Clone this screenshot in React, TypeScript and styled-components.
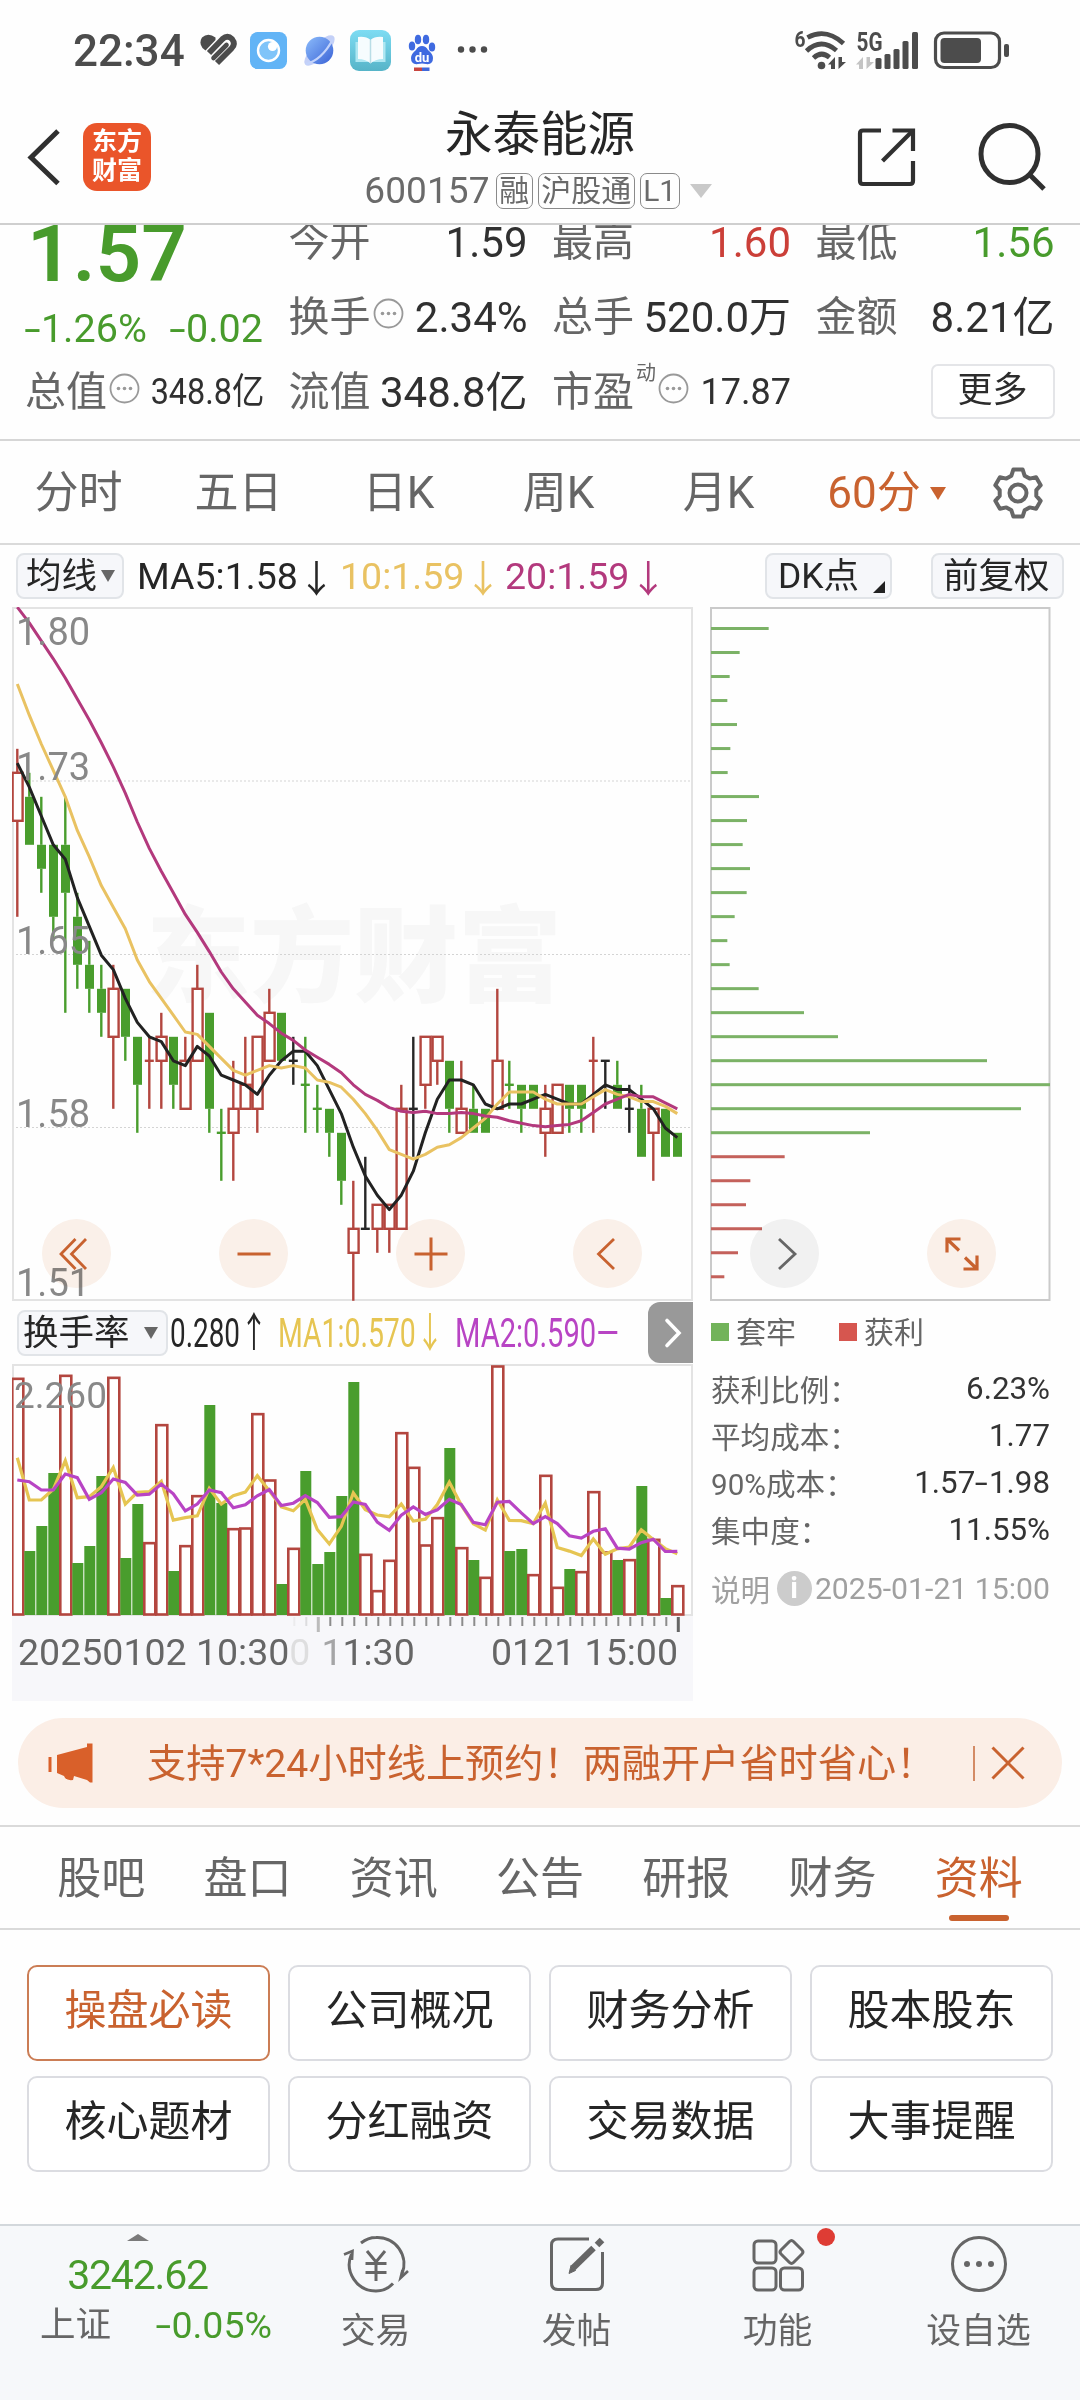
import React from "react";
import styled, { createGlobalStyle } from "styled-components";

const GREEN = "#489b2c";
const RED = "#cb3f38";
const ORANGE = "#c9622f";
const YELLOW = "#e9c262";
const MAGENTA = "#b3397d";
const PURPLE = "#b844c4";
const FONT = `Roboto, "Noto Sans CJK SC", sans-serif`;

const Global = createGlobalStyle`
  * { box-sizing: border-box; }
  body { margin: 0; background: #fdfdfd; font-family: ${FONT}; color: #333; }
  svg { display: block; flex: none; }
`;

const Page = styled.div`
  width: 1080px;
  height: 2400px;
  display: flex;
  flex-direction: column;
  background: #fefefe;
  overflow: hidden;
  white-space: nowrap;
`;
const Minus = styled.span`
  display: inline-block;
  transform: scaleX(1.5);
  margin: 0 3px 0 2px;
`;

/* ---------- status bar ---------- */
const StatusBar = styled.div`
  height: 102px;
  display: flex;
  justify-content: space-between;
  padding: 0 70px 0 73px;
`;
const StatusGroup = styled.div`
  display: flex;
  height: 102px;
  align-items: center;
`;
const Clock = styled.span`
  font-size: 44px;
  font-weight: 500;
  color: #4c4c4c;
  width: 125px;
  line-height: 104px;
`;

/* ---------- header ---------- */
const Header = styled.header`
  height: 123px;
  display: grid;
  grid-template-columns: 1fr auto 1fr;
  border-bottom: 2px solid #cfcfcf;
`;
const HeaderSide = styled.div<{ $end?: boolean }>`
  display: flex;
  align-items: flex-start;
  justify-content: ${(p) => (p.$end ? "flex-end" : "flex-start")};
  gap: ${(p) => (p.$end ? 60 : 22)}px;
  padding: 20px ${(p) => (p.$end ? 33 : 0)}px 0 ${(p) => (p.$end ? 0 : 25)}px;
`;
const AppLogo = styled.div`
  width: 68px;
  height: 68px;
  margin-top: 1px;
  border-radius: 14px;
  background: #ea552a;
  color: #fff;
  font-size: 25px;
  font-weight: 600;
  line-height: 29px;
  padding: 4px 0;
  text-align: center;
  white-space: normal;
`;
const TitleBox = styled.div`
  display: flex;
  flex-direction: column;
  align-items: center;
`;
const Title = styled.h1`
  margin: 1px 0 0;
  font-size: 47.5px;
  font-weight: 400;
  line-height: 64px;
  color: #262626;
`;
const CodeLine = styled.div`
  display: flex;
  align-items: center;
  margin: 4px 0 0 -4px;
  height: 40px;
  gap: 5px;
  color: #6a6a6a;
`;
const Code = styled.span`
  font-size: 37px;
  letter-spacing: 0.1px;
  line-height: 42px;
  padding-right: 1px;
`;
const Tag = styled.span`
  height: 36px;
  line-height: 34px;
  font-size: 30px;
  padding: 0 2.5px;
  border: 1.5px solid #8a8a8a;
  border-radius: 7px;
`;
const Caret = styled.i<{ $c: string; $w: number; $h: number; $ml?: number; $up?: boolean }>`
  width: 0;
  height: 0;
  flex: none;
  margin-left: ${(p) => p.$ml || 0}px;
  border-left: ${(p) => p.$w / 2}px solid transparent;
  border-right: ${(p) => p.$w / 2}px solid transparent;
  ${(p) => (p.$up ? "border-bottom" : "border-top")}: ${(p) => p.$h}px solid ${(p) => p.$c};
`;

/* ---------- quote ---------- */
const Quote = styled.section`
  height: 216px;
  overflow: hidden;
  border-bottom: 2px solid #d6d6d6;
`;
const QuoteGrid = styled.div`
  margin-top: -20.500px;
  padding-left: 25px;
  display: grid;
  grid-template-columns: repeat(4, 238px);
  grid-template-rows: repeat(3, 75px);
  column-gap: 25.5px;
`;
const PriceBlock = styled.div`
  grid-row: span 2;
  color: ${GREEN};
`;
const Price = styled.div`
  font-size: 80px;
  font-weight: 600;
  line-height: 80px;
  padding: 9px 0 0 2px;
`;
const Change = styled.div`
  display: flex;
  justify-content: space-between;
  font-size: 39.5px;
  line-height: 70px;
`;
const Cell = styled.div`
  display: flex;
  align-items: center;
  justify-content: space-between;
`;
const Label = styled.span`
  display: flex;
  align-items: center;
  gap: 2px;
  font-size: 41px;
  line-height: 75px;
  color: #666;
  svg {
    margin-bottom: 8px;
  }
`;
const Sup = styled.sup`
  font-size: 20px;
  line-height: 20px;
  align-self: flex-start;
  margin-top: 8px;
  width: 20px;
`;
const Value = styled.span<{ $c?: string; $s?: number; $squeeze?: number }>`
  font-size: ${(p) => p.$s || 42}px;
  line-height: 75px;
  color: ${(p) => p.$c || "#303030"};
  transform: scaleX(${(p) => p.$squeeze || 1});
  transform-origin: right;
  margin: 0 -1px 0 -30px;
`;
const MoreCell = styled.div`
  display: flex;
  justify-content: flex-end;
  align-items: center;
  padding-bottom: 2px;
`;
const More = styled.button`
  width: 124px;
  height: 55px;
  margin-right: -1px;
  padding: 0;
  border: 2px solid #e4e5e8;
  border-radius: 7px;
  background: #fff;
  font: 35px/46px ${FONT};
  color: #2c2c2c;
`;

/* ---------- period tabs ---------- */
const Periods = styled.nav`
  height: 104px;
  display: flex;
  align-items: center;
  border-bottom: 2px solid #dadada;
`;
const Period = styled.div<{ $w: number; $on?: boolean }>`
  width: ${(p) => p.$w}px;
  display: flex;
  justify-content: center;
  align-items: center;
  padding: 2px 3px 0 0;
  font-size: 44px;
  line-height: 100px;
  color: ${(p) => (p.$on ? ORANGE : "#666")};
  svg {
    margin: 0 -3px 1px 0;
  }
`;

/* ---------- chart toolbar ---------- */
const Toolbar = styled.div`
  height: 62px;
  display: flex;
  align-items: center;
  padding: 0 16px;
`;
const Chip = styled.button<{ $w: number; $pad?: number; $ml?: number }>`
  position: relative;
  width: ${(p) => p.$w}px;
  height: 46px;
  margin-left: ${(p) => p.$ml || 0}px;
  padding: 0 0 0 ${(p) => p.$pad ?? 8}px;
  display: flex;
  align-items: center;
  border: 2px solid #e1e4e8;
  border-radius: 8px;
  background: #f6f7fa;
  font: 35.5px/42px ${FONT};
  color: #262626;
`;
const Corner = styled.i`
  position: absolute;
  right: 5px;
  bottom: 4px;
  border-left: 12px solid transparent;
  border-bottom: 12px solid #222;
`;
const Ma = styled.span<{ $c: string; $w: number; $pad?: number }>`
  display: flex;
  align-items: center;
  width: ${(p) => p.$w}px;
  padding-left: ${(p) => p.$pad ?? 13}px;
  font-size: 37.5px;
  line-height: 46px;
  color: ${(p) => p.$c};
`;
const Arrow = styled.span`
  font-family: "Noto Sans CJK SC", sans-serif;
  display: flex;
  justify-content: center;
  width: 38px;
`;
const Spacer = styled.div`
  flex: 1;
`;

/* ---------- charts ---------- */
const Charts = styled.section`
  position: relative;
  height: 1093px;
  display: flex;
  padding-left: 12px;
  gap: 17px;
`;
const Left = styled.div`
  width: 681px;
`;
const Right = styled.div`
  width: 341px;
`;
const Controls = styled.div`
  position: absolute;
  left: 42px;
  top: 612px;
  width: 954px;
  display: flex;
  justify-content: space-between;
`;
const Round = styled.button<{ $grey?: boolean }>`
  width: 69px;
  height: 69px;
  padding: 0;
  border: 0;
  border-radius: 50%;
  background: ${(p) => (p.$grey ? "#f2f2f2" : "#fbf1ea")};
  mix-blend-mode: multiply;
  display: flex;
  align-items: center;
  justify-content: center;
`;
const VolBar = styled.div`
  height: 63px;
  display: flex;
  align-items: center;
  padding-left: 5px;
`;
const Narrow = styled.span<{ $c: string; $w: number; $k: number }>`
  width: ${(p) => p.$w}px;
  flex: none;
  font-size: 41px;
  line-height: 60px;
  color: ${(p) => p.$c};
  transform: scaleX(${(p) => p.$k});
  transform-origin: left;
`;
const Next = styled.button`
  width: 45px;
  height: 61px;
  padding: 0 0 0 4px;
  border: 0;
  border-radius: 12px 0 0 12px;
  background: #999;
  display: flex;
  align-items: center;
  justify-content: center;
`;
const Axis = styled.div`
  height: 85px;
  background: #f7f7fa;
`;
const AxisText = styled.div`
  display: flex;
  justify-content: space-between;
  padding: 0 15px 0 6px;
  font-size: 37.5px;
  line-height: 40px;
  color: #666;
`;
const Fade = styled.span<{ $c: string; $ml?: number }>`
  color: ${(p) => p.$c};
  margin-left: ${(p) => p.$ml || 0}px;
`;
const Legend = styled.div`
  display: flex;
  align-items: center;
  height: 60px;
  padding-bottom: 3px;
  font-size: 30px;
  color: #666;
`;
const LegendItem = styled.span<{ $c: string }>`
  display: flex;
  align-items: center;
  gap: 7px;
  width: 128px;
  padding-left: 1px;
  &::before {
    content: "";
    width: 18px;
    height: 18px;
    margin-top: 4px;
    background: ${(p) => p.$c};
  }
`;
const Stat = styled.div<{ $muted?: boolean }>`
  display: flex;
  align-items: center;
  justify-content: space-between;
  height: ${(p) => (p.$muted ? 72 : 47)}px;
  font-size: 29.6px;
  color: ${(p) => (p.$muted ? "#a0a0a0" : "#666")};
  padding: 0 1px 1px;
  b {
    font-weight: 400;
    font-size: ${(p) => (p.$muted ? 30.2 : 31.3)}px;
    color: ${(p) => (p.$muted ? "#a0a0a0" : "#333")};
  }
`;
const Info = styled.i`
  width: 35px;
  height: 35px;
  border-radius: 50%;
  background: #ccc;
  color: #fff;
  font: 700 29px/34px Roboto, sans-serif;
  text-align: center;
  margin-left: 3px;
`;
const StatHead = styled.div`
  height: 4px;
`;

/* ---------- banner ---------- */
const Banner = styled.div`
  margin: 18px 18px 17px;
  height: 90px;
  border-radius: 45px;
  background: #fbeee6;
  display: flex;
  align-items: center;
  padding: 0 37px 0 29px;
  font-size: 39.2px;
  color: ${ORANGE};
`;
const BannerText = styled.span`
  flex: 1;
  padding: 0 0 6px 53px;
`;
const Divider = styled.i`
  width: 2px;
  height: 35px;
  background: #d38b66;
  margin-right: 16px;
`;

/* ---------- info tabs ---------- */
const Tabs = styled.nav`
  height: 105px;
  flex: none;
  display: flex;
  padding: 0 28px;
  border-top: 2px solid #dadada;
  border-bottom: 2px solid #dadada;
`;
const Tab = styled.div<{ $on?: boolean }>`
  position: relative;
  flex: 1;
  text-align: center;
  font-size: 44px;
  line-height: 105px;
  color: ${(p) => (p.$on ? ORANGE : "#666")};
  &::after {
    content: "";
    display: ${(p) => (p.$on ? "block" : "none")};
    position: absolute;
    left: calc(50% - 30px);
    bottom: 7px;
    width: 60px;
    height: 6px;
    border-radius: 3px;
    background: ${ORANGE};
  }
`;
const Topics = styled.div`
  display: grid;
  grid-template-columns: repeat(4, 243px);
  grid-auto-rows: 96px;
  gap: 15px 18px;
  padding: 35px 27px 0;
  height: 294px;
`;
const Topic = styled.button<{ $on?: boolean }>`
  padding: 0 0 4px;
  border: 2px solid ${(p) => (p.$on ? "#cb7d55" : "#dbdce1")};
  border-radius: 10px;
  background: #fff;
  font: 42px/80px ${FONT};
  color: ${(p) => (p.$on ? ORANGE : "#262626")};
`;

/* ---------- bottom bar ---------- */
const Bottom = styled.footer`
  flex: 1;
  display: flex;
  border-top: 2px solid #d3d8dc;
  background: #f6f8fa;
`;
const IndexBox = styled.div`
  width: 275px;
  padding-top: 8px;
  display: flex;
  flex-direction: column;
  align-items: center;
  color: ${GREEN};
`;
const IndexValue = styled.div`
  font-size: 41px;
  letter-spacing: -1.2px;
  line-height: 50px;
  margin-top: 9px;
`;
const IndexRow = styled.div`
  align-self: flex-start;
  width: 232px;
  margin-left: 40px;
  display: flex;
  justify-content: space-between;
  font-size: 37.5px;
  line-height: 50px;
`;
const IndexName = styled.span`
  font-size: 35.5px;
  color: #666;
`;
const NavItem = styled.div`
  position: relative;
  width: 201px;
  padding-top: 8px;
  display: flex;
  flex-direction: column;
  align-items: center;
  font-size: 34.8px;
  line-height: 50px;
  color: #666;
  svg {
    margin-bottom: 12px;
  }
`;
const Dot = styled.i`
  position: absolute;
  left: 140px;
  top: 2px;
  width: 18px;
  height: 18px;
  border-radius: 50%;
  background: #de3c34;
`;

/* ---------- data ---------- */
type Kind = "r" | "g" | "k";
// kind, high, low, body top, body bottom; one unit is 0.01 below 1.74
const CANDLES: [Kind, number, number, number, number][] = [
  ["r", 0, 7, 1, 3], ["g", 1, 4, 2, 4], ["g", 2, 6, 4, 5], ["g", 4, 8, 4, 7],
  ["g", 2, 11, 4, 6], ["g", 6, 10, 7, 9], ["g", 8, 11, 9, 10], ["g", 9, 12, 10, 11],
  ["r", 9, 15, 10, 12], ["g", 10, 13, 10, 12], ["g", 12, 16, 12, 14], ["r", 12, 15, 13, 13],
  ["r", 11, 15, 12, 13], ["g", 12, 15, 12, 14], ["r", 12, 15, 13, 15], ["r", 9, 13, 10, 13],
  ["g", 11, 16, 11, 15], ["g", 15, 18, 16, 16], ["r", 13, 18, 15, 16], ["r", 12, 15, 14, 15],
  ["r", 12, 16, 12, 15], ["r", 10, 13, 11, 13], ["g", 11, 13, 11, 13], ["k", 12, 14, 13, 13],
  ["g", 12, 16, 14, 14], ["g", 14, 16, 15, 15], ["g", 15, 17, 15, 16], ["g", 16, 19, 16, 18],
  ["r", 18, 23, 20, 21], ["k", 17, 20, 20, 20], ["r", 19, 21, 19, 20], ["r", 19, 21, 19, 20],
  ["r", 14, 20, 15, 20], ["k", 12, 17, 15, 15], ["r", 12, 15, 12, 14], ["r", 12, 14, 12, 13],
  ["g", 13, 16, 13, 15], ["r", 13, 16, 15, 16], ["g", 14, 16, 15, 16], ["g", 15, 16, 15, 16],
  ["r", 10, 15, 13, 15], ["g", 13, 15, 14, 14], ["g", 14, 16, 14, 15], ["g", 14, 15, 14, 15],
  ["r", 14, 17, 15, 16], ["r", 14, 16, 14, 16], ["g", 14, 16, 14, 15], ["g", 14, 16, 14, 15],
  ["r", 12, 16, 13, 13], ["k", 13, 15, 13, 13], ["g", 13, 15, 14, 15], ["k", 14, 16, 15, 15],
  ["g", 14, 17, 15, 17], ["r", 15, 18, 15, 16], ["g", 15, 17, 15, 17], ["g", 16, 17, 16, 17],
];
const VOLUMES: [Kind, number][] = [
  ["r", 710], ["g", 192], ["g", 267], ["g", 426], ["r", 719], ["g", 156], ["g", 207], ["g", 417],
  ["r", 713], ["g", 171], ["g", 333], ["r", 217], ["r", 571], ["g", 132], ["r", 208], ["r", 358],
  ["g", 630], ["g", 336], ["r", 259], ["r", 261], ["r", 604], ["r", 405], ["g", 93], ["r", 200],
  ["g", 432], ["g", 153], ["g", 189], ["g", 357], ["g", 699], ["r", 182], ["r", 73], ["r", 164],
  ["r", 547], ["r", 443], ["r", 210], ["r", 292], ["g", 501], ["r", 202], ["g", 165], ["r", 113],
  ["r", 747], ["g", 192], ["g", 198], ["r", 121], ["r", 419], ["r", 83], ["g", 138], ["r", 130],
  ["r", 370], ["r", 189], ["g", 165], ["r", 166], ["g", 387], ["r", 227], ["g", 51], ["r", 88],
];
const CHIPS = [
  173, 86, 56, 49, 78, 58, 50, 144, 108, 95, 117, 107, 71, 49, 56, 143, 279, 381, 828, 1017, 930, 477,
  221, 118, 105, 153, 81, 40,
];

const colorOf = (k: Kind) => (k === "r" ? "#b3463f" : k === "g" ? "#499d2d" : "#262626");
const cx = (i: number) => 5.3 + 12 * i;
const ky = (k: number) => 141.8 + 24 * k;

function average(values: number[], n: number, seed: number[]) {
  return values.map((_, i) =>
    i < seed.length ? seed[i] : values.slice(i - n + 1, i + 1).reduce((a, b) => a + b, 0) / n
  );
}
const closes = CANDLES.map((c) => (c[0] === "g" ? c[4] : c[3]));
const ma5 = average(closes, 5, [0.6, 1.6, 2.8, 4]);
const ma10 = average(closes, 10, [-2.7, -1.4, -0.2, 0.9, 2, 3.4, 4.5, 5.7, 6.6]);
const ma20 = average(closes, 20, [
  -5.9, -5.25, -4.5, -3.75, -2.95, -2.07, -1.2, -0.25, 0.75, 1.85, 3.05, 4.15, 5.1, 6, 6.9, 7.65, 8.45, 9.3, 10,
]);
const vols = VOLUMES.map((v) => v[1]);
const vma5 = average(vols, 5, [472, 345, 345, 377]);
const vma10 = average(vols, 10, [405, 400, 375, 375, 423, 412, 347, 367, 408]);

const points = (vs: number[], y: (v: number) => number) =>
  vs.map((v, i) => `${cx(i).toFixed(1)},${y(v).toFixed(1)}`).join(" ");

function PriceChart() {
  return (
    <svg width="681" height="694" viewBox="0 0 681 694" fontFamily={FONT}>
      <text x="134" y="387" fontSize="104" fontWeight="900" fill="#f7f7f7" fontFamily="Noto Sans CJK SC">
        东方财富
      </text>
      {[174, 347.5, 520.5].map((y) => (
        <line key={y} x1="0" x2="680" y1={y} y2={y} stroke="#d4d4d4" strokeDasharray="2 2" />
      ))}
      <rect x="1" y="1" width="679" height="692" fill="none" stroke="#e3e3e3" strokeWidth="2" />
      {CANDLES.map(([k, h, l, t, b], i) => {
        const c = colorOf(k);
        const x = cx(i);
        return (
          <g key={i} stroke={c} strokeWidth="2.400">
            {h < t && <line x1={x} x2={x} y1={ky(h)} y2={ky(t)} />}
            {l > b && <line x1={x} x2={x} y1={ky(b)} y2={ky(l)} />}
            {t === b ? (
              <line x1={x - 4.5} x2={x + 4.5} y1={ky(t)} y2={ky(t)} />
            ) : k === "r" ? (
              <rect x={x - 4.7} y={ky(t)} width="10" height={ky(b) - ky(t)} fill="#fff" />
            ) : (
              <rect x={x - 4.3} y={ky(t)} width="9" height={ky(b) - ky(t)} fill={c} stroke="none" />
            )}
          </g>
        );
      })}
      <g fill="none" strokeWidth="3" strokeLinejoin="round">
        <polyline points={points(ma5, ky)} stroke="#222" />
        <polyline points={points(ma10, ky)} stroke={YELLOW} />
        <polyline points={points(ma20, ky)} stroke={MAGENTA} />
      </g>
      <g fontSize="38" fill="#888">
        <text x="4" y="38">1.80</text>
        <text x="4" y="173">1.73</text>
        <text x="4" y="346.500">1.65</text>
        <text x="4" y="520">1.58</text>
        <text x="4" y="689">1.51</text>
      </g>
    </svg>
  );
}

function VolumeChart() {
  const y = (v: number) => 251 - v / 3;
  return (
    <svg width="681" height="252" viewBox="0 0 681 252" fontFamily={FONT}>
      <rect x="1" y="1" width="679" height="250" fill="none" stroke="#e3e3e3" strokeWidth="2" />
      {VOLUMES.map(([k, v], i) =>
        k === "r" ? (
          <rect key={i} x={cx(i) - 5} y={y(v) + 0.5} width="11" height={v / 3 - 1} fill="#fff" stroke={colorOf(k)} strokeWidth="2.6" />
        ) : (
          <rect key={i} x={cx(i) - 5} y={y(v)} width="11" height={v / 3} fill={colorOf(k)} />
        )
      )}
      <g fill="none" strokeWidth="3.200">
        <polyline points={points(vma5, y)} stroke="#e6c552" />
        <polyline points={points(vma10, y)} stroke={PURPLE} />
      </g>
      <text x="2" y="44" fontSize="37" fill="#888">2.260</text>
    </svg>
  );
}

function ChipChart() {
  return (
    <svg width="341" height="694" viewBox="0 0 341 694">
      <rect x="1" y="1" width="338.500" height="692" fill="none" stroke="#cacaca" strokeWidth="2" />
      {CHIPS.map((w, i) => (
        <rect key={i} x="1" y={20 + 24.01 * i} width={w / 3} height="3" fill={i < 22 ? "#7bb266" : "#c4615b"} />
      ))}
    </svg>
  );
}

function Ticks() {
  const list = [];
  for (let i = 23; i < 56; i++) list.push(i);
  return (
    <svg width="681" height="16" viewBox="0 0 681 16">
      {list.map((i) => {
        const major = i === 25 || i === 55;
        const c = i === 23 ? "#ebebed" : i === 24 ? "#dcdcde" : i === 25 ? "#bbb" : i === 55 ? "#666" : "#8c8c8c";
        return <rect key={i} x={cx(i) + (major ? -0.5 : 0)} y="1" width={major ? 3 : 2} height={major ? 15 : 9} fill={c} />;
      })}
    </svg>
  );
}

const Bubble = () => (
  <svg width="31" height="31" viewBox="0 0 31 31">
    <circle cx="15.5" cy="15.5" r="14" fill="none" stroke="#999" strokeWidth="1.8" />
    {[9.5, 15.5, 21.5].map((x) => (
      <circle key={x} cx={x} cy="15.5" r="1.8" fill="#999" />
    ))}
  </svg>
);

const StatusLeft = () => (
  <svg width="292" height="44" viewBox="198 30 292 44">
    <defs>
      <linearGradient id="book" x1="0" y1="0" x2="0" y2="1">
        <stop offset="0" stopColor="#7ddcf3" />
        <stop offset="1" stopColor="#56b4c8" />
      </linearGradient>
      <linearGradient id="planet" x1="0" y1="0" x2="1" y2="1">
        <stop offset="0" stopColor="#8cbcfb" />
        <stop offset="1" stopColor="#3a62d6" />
      </linearGradient>
    </defs>
    <path d="M205.500 51.500 A9 9 0 0 1 202 38.500 Q208 33 215.500 38.500 L215.500 41 Z" fill="#4c4c4c" />
    <path d="M209 54 L222.500 40 Q227.500 35.500 232 40 Q236 45 231.500 49.500 L217 64" fill="none" stroke="#4c4c4c" strokeWidth="5.800" />
    <path d="M213.500 59 L226.500 46" stroke="#4c4c4c" strokeWidth="4.600" strokeLinecap="round" />
    <rect x="250" y="33" width="37" height="37" rx="7.500" fill="#62b4f6" />
    <circle cx="268.500" cy="51.500" r="10.500" fill="#7fc4f9" stroke="#fff" strokeWidth="2.400" />
    <circle cx="272.500" cy="47.500" r="4.600" fill="#fff" />
    <ellipse cx="319.500" cy="51.500" rx="20" ry="7.500" fill="#c4d0f7" transform="rotate(-45 319.500 51.500)" />
    <circle cx="319.500" cy="51.500" r="13.800" fill="url(#planet)" />
    <path d="M306 65 Q322 61 333 40" fill="none" stroke="#c3d3fb" strokeWidth="2.200" />
    <rect x="350" y="31" width="41" height="41" rx="9" fill="url(#book)" />
    <path d="M355.500 43 h30 v20 h-30 Z" fill="#aee7f2" />
    <path d="M358 38 Q366 37 370.500 41 Q375 37 383 38 V60 Q375 60 370.500 64.500 Q366 60 358 60 Z" fill="#f6fcfe" />
    <path d="M370.500 41 V64" stroke="#b9dde6" strokeWidth="1.500" />
    <g fill="#3f6ae0">
      <ellipse cx="412" cy="47" rx="3.200" ry="4.600" />
      <ellipse cx="418" cy="40.500" rx="3.200" ry="4.800" />
      <ellipse cx="426" cy="40.500" rx="3.200" ry="4.800" />
      <ellipse cx="432" cy="48" rx="3.200" ry="4.600" />
      <path d="M422 47 Q426 47 428 51 Q433 55 433 59 Q433 66 426 65 Q422 64 418 65 Q411 66 411 59 Q411 55 416 51 Q418 47 422 47 Z" />
    </g>
    <text x="422" y="62.500" textAnchor="middle" fontFamily="Roboto" fontSize="13" fontWeight="700" fill="#fff">du</text>
    <rect x="414" y="68.500" width="8" height="3.500" fill="#c8453f" />
    <rect x="422" y="68.500" width="7.500" height="3.500" fill="#4068da" />
    {[461, 472.500, 484].map((x) => (
      <circle key={x} cx={x} cy="50.500" r="3.200" fill="#4c4c4c" />
    ))}
  </svg>
);

const StatusRight = () => (
  <svg width="216" height="44" viewBox="794 29 216 44" fontFamily="Roboto" fontWeight="700">
    <text x="794.500" y="46.500" fontSize="22" textLength="11" lengthAdjust="spacingAndGlyphs" fill="#4c4c4c">6</text>
    <g fill="none" stroke="#4c4c4c" strokeWidth="4.800">
      <path d="M807.500 37.500 Q826 27.500 843.500 43.500" />
      <path d="M806.500 51 Q821 37.500 836.500 50.500" />
      <path d="M813.500 58 Q821.500 50.500 829.500 57.500" />
    </g>
    <circle cx="821.500" cy="65.500" r="3.800" fill="#4c4c4c" />
    <path d="M828 64.500 L835 57 V69 H831 V64.500 Z M838.500 57 V69 L846 62 H842 V57 Z" fill="#4c4c4c" />
    <text x="856.500" y="50.500" fontSize="25" textLength="26" lengthAdjust="spacingAndGlyphs" fill="#4c4c4c">5G</text>
    <path d="M856 64.500 L863 57 V69 H859 V64.500 Z M866.500 57 V69 L874 62 H870 V57 Z" fill="#c4c4c4" />
    {[[875.500, 58], [884.500, 54], [893.500, 49], [902.500, 41], [912, 32]].map(([x, y]) => (
      <rect key={x} x={x} y={y} width="6" height={69 - y} rx="1.500" fill="#4c4c4c" />
    ))}
    <rect x="935.500" y="33" width="64" height="34.500" rx="8.500" fill="none" stroke="#4c4c4c" strokeWidth="3.200" />
    <rect x="940.500" y="38" width="40.500" height="25" rx="4" fill="#4c4c4c" />
    <rect x="1004" y="44" width="5" height="13" rx="2" fill="#4c4c4c" />
  </svg>
);

const gearPath = (() => {
  const pts: string[] = [];
  for (let i = 0; i < 6; i++) {
    const base = (i * 60 - 90) * (Math.PI / 180);
    const add = (r: number, d: number) => {
      const a = base + (d * Math.PI) / 180;
      pts.push(`${(27 + r * Math.cos(a)).toFixed(1)} ${(27 + r * Math.sin(a)).toFixed(1)}`);
    };
    add(18.5, -21);
    add(24, -11);
    add(24, 11);
    add(18.5, 21);
  }
  return `M${pts.join(" L")} Z`;
})();
const Gear = () => (
  <svg width="54" height="54" viewBox="0 0 54 54" fill="none" stroke="#666" strokeWidth="4">
    <path d={gearPath} strokeLinejoin="round" />
    <circle cx="27" cy="27" r="8.500" />
  </svg>
);

const TOPICS = ["操盘必读", "公司概况", "财务分析", "股本股东", "核心题材", "分红融资", "交易数据", "大事提醒"];
const TABS = ["股吧", "盘口", "资讯", "公告", "研报", "财务", "资料"];

export default function App() {
  return (
    <Page>
      <Global />
      <StatusBar>
        <StatusGroup>
          <Clock>22:34</Clock>
          <StatusLeft />
        </StatusGroup>
        <StatusGroup>
          <StatusRight />
        </StatusGroup>
      </StatusBar>

      <Header>
        <HeaderSide>
          <svg width="36" height="70" viewBox="0 0 36 70" fill="none" stroke="#303030" strokeWidth="5">
            <path d="M33 9 L6 35.500 L33 61.500" />
          </svg>
          <AppLogo>
            东方
            <br />
            财富
          </AppLogo>
        </HeaderSide>
        <TitleBox>
          <Title>永泰能源</Title>
          <CodeLine>
            <Code>600157</Code>
            <Tag>融</Tag>
            <Tag>沪股通</Tag>
            <Tag>L1</Tag>
            <Caret $c="#c9c9c9" $w={22} $h={14} $ml={5} />
          </CodeLine>
        </TitleBox>
        <HeaderSide $end>
          <svg width="60" height="70" viewBox="856 122 60 70" fill="none" stroke="#303030" strokeWidth="4.200">
            <path d="M881 130.500 H863 Q860 130.500 860 133.500 V181 Q860 184 863 184 H910 Q913 184 913 181 V161" />
            <path d="M892.500 130.500 H913 V151" />
            <path d="M912 131.500 L882.500 161" />
          </svg>
          <svg width="71" height="70" viewBox="976 122 71 70" fill="none" stroke="#303030" strokeWidth="5">
            <circle cx="1009.500" cy="154" r="28.500" />
            <path d="M1029.500 174.500 L1044 189" />
          </svg>
        </HeaderSide>
      </Header>

      <Quote>
        <QuoteGrid>
          <PriceBlock>
            <Price>1.57</Price>
            <Change>
              <span><Minus>-</Minus>1.26%</span>
              <span><Minus>-</Minus>0.02</span>
            </Change>
          </PriceBlock>
          <Cell><Label>今开</Label><Value>1.59</Value></Cell>
          <Cell><Label>最高</Label><Value $c={RED}>1.60</Value></Cell>
          <Cell><Label>最低</Label><Value $c={GREEN}>1.56</Value></Cell>
          <Cell><Label>换手<Bubble /></Label><Value>2.34%</Value></Cell>
          <Cell><Label>总手</Label><Value>520.0万</Value></Cell>
          <Cell><Label>金额</Label><Value>8.21亿</Value></Cell>
          <Cell><Label>总值<Bubble /></Label><Value $s={36} $squeeze={0.9}>348.8亿</Value></Cell>
          <Cell><Label>流值</Label><Value>348.8亿</Value></Cell>
          <Cell><Label>市盈<Sup>动</Sup><Bubble /></Label><Value $s={36}>17.87</Value></Cell>
          <MoreCell><More>更多</More></MoreCell>
        </QuoteGrid>
      </Quote>

      <Periods>
        {["分时", "五日", "日K", "周K", "月K"].map((t) => (
          <Period key={t} $w={160}>{t}</Period>
        ))}
        <Period $w={176} $on>
          60分
          <Caret $c={ORANGE} $w={16} $h={13} $ml={9} />
        </Period>
        <Period $w={84}><Gear /></Period>
      </Periods>

      <Toolbar>
        <Chip $w={108}>均线<Caret $c="#666" $w={15} $h={12} $ml={4} /></Chip>
        <Ma $c="#262626" $w={203}>MA5:1.58<Arrow>↓</Arrow></Ma>
        <Ma $c={YELLOW} $w={165}>10:1.59<Arrow>↓</Arrow></Ma>
        <Ma $c={MAGENTA} $w={180}>20:1.59<Arrow>↓</Arrow></Ma>
        <Spacer />
        <Chip $w={127} $pad={11}>DK点<Corner /></Chip>
        <Chip $w={133} $ml={39} $pad={10}>前复权</Chip>
      </Toolbar>

      <Charts>
        <Left>
          <PriceChart />
          <VolBar>
            <Chip $w={151} $pad={4}>换手率<Caret $c="#666" $w={15} $h={12} $ml={14} /></Chip>
            <Spacer />
            <Narrow $c="#262626" $w={108} $k={0.68}>0.280↑</Narrow>
            <Narrow $c="#e6c552" $w={177} $k={0.693}>MA1:0.570↓</Narrow>
            <Narrow $c={PURPLE} $w={193} $k={0.71}>MA2:0.590—</Narrow>
            <Next>
              <svg width="20" height="32" viewBox="0 0 20 32" fill="none" stroke="#fff" strokeWidth="3.600" strokeLinecap="round">
                <path d="M4 3.500 L16 16 L4 28.500" />
              </svg>
            </Next>
          </VolBar>
          <VolumeChart />
          <Axis>
            <Ticks />
            <AxisText>
              <span>
                20250102 10:30
                <Fade $c="#dededf">0</Fade>
                <Fade $c="#a5a5a6" $ml={11}>1</Fade>
                1:30
              </span>
              <span>0121 15:00</span>
            </AxisText>
          </Axis>
        </Left>
        <Right>
          <ChipChart />
          <Legend>
            <LegendItem $c="#72b35a">套牢</LegendItem>
            <LegendItem $c="#d6564f">获利</LegendItem>
          </Legend>
          <StatHead />
          <Stat>获利比例：<b>6.23%</b></Stat>
          <Stat>平均成本：<b>1.77</b></Stat>
          <Stat>90%成本：<b>1.57<Minus>-</Minus>1.98</b></Stat>
          <Stat>集中度：<b>11.55%</b></Stat>
          <Stat $muted>说明<Info>i</Info><b>2025-01-21 15:00</b></Stat>
        </Right>
        <Controls>
          <Round>
            <svg width="36" height="36" viewBox="0 0 36 36" fill="none" stroke={ORANGE} strokeWidth="2.800">
              <path d="M16.500 3 L2 18 L16.500 33 M27 3 L12.500 18 L27 33" />
            </svg>
          </Round>
          <Round>
            <svg width="34" height="34" viewBox="0 0 34 34" stroke={ORANGE} strokeWidth="3">
              <path d="M0.500 17 H33.500" />
            </svg>
          </Round>
          <Round>
            <svg width="34" height="34" viewBox="0 0 34 34" stroke={ORANGE} strokeWidth="3">
              <path d="M0.500 17 H33.500 M17 0.500 V33.500" />
            </svg>
          </Round>
          <Round>
            <svg width="34" height="34" viewBox="0 0 34 34" fill="none" stroke={ORANGE} strokeWidth="2.800">
              <path d="M23 2 L7.500 17 L23 32" />
            </svg>
          </Round>
          <Round $grey>
            <svg width="34" height="34" viewBox="0 0 34 34" fill="none" stroke="#666" strokeWidth="2.800">
              <path d="M11 2 L27 17 L11 32" />
            </svg>
          </Round>
          <Round>
            <svg width="34" height="34" viewBox="0 0 34 34" fill="none" stroke={ORANGE} strokeWidth="3.200">
              <path d="M15.500 2 H2 V15.500 M2 2 L14 13.500 M18.500 32 H32 V18.500 M32 32 L20 20.500" />
            </svg>
          </Round>
        </Controls>
      </Charts>

      <Banner>
        <svg width="47" height="42" viewBox="0 0 47 42" fill="#d9602a">
          <path d="M1.500 15 H4.500 V30 H1.500 Z M10 13 L40 5 V1.500 H45.500 V40.500 H43 L40 38 L27 34 L26 38 Q19 39 17 34 L10 31 Z" />
        </svg>
        <BannerText>支持7*24小时线上预约！两融开户省时省心！</BannerText>
        <Divider />
        <svg width="34" height="34" viewBox="0 0 34 34" stroke={ORANGE} strokeWidth="3">
          <path d="M1.500 1.500 L32.500 32.500 M32.500 1.500 L1.500 32.500" />
        </svg>
      </Banner>

      <Tabs>
        {TABS.map((t) => (
          <Tab key={t} $on={t === "资料"}>{t}</Tab>
        ))}
      </Tabs>
      <Topics>
        {TOPICS.map((t, i) => (
          <Topic key={t} $on={i === 0}>{t}</Topic>
        ))}
      </Topics>

      <Bottom>
        <IndexBox>
          <Caret $c="#7a7a7a" $w={22} $h={7} $up />
          <IndexValue>3242.62</IndexValue>
          <IndexRow>
            <IndexName>上证</IndexName>
            <span><Minus>-</Minus>0.05%</span>
          </IndexRow>
        </IndexBox>
        <NavItem>
          <svg width="68" height="60" viewBox="0 0 68 60" fill="none" stroke="#666" strokeWidth="3">
            <path d="M19 9 Q26 3.500 34 3.500 A26.500 26.500 0 0 1 60 40" />
            <path d="M51 49.500 Q44 57 34 57 A26.500 26.500 0 0 1 9.500 20" />
            <path d="M2 20.500 L10.500 17 L10 26 M66 37 L58.500 44 L60.500 36" strokeWidth="2.600" />
            <path d="M25 17 L34 28 L43 17 M23.500 29.500 H44.500 M23.500 38.500 H44.500 M34 28 V47" />
          </svg>
          交易
        </NavItem>
        <NavItem>
          <svg width="60" height="60" viewBox="0 0 60 60" fill="none" stroke="#666" strokeWidth="3">
            <path d="M42 5 H11 Q4.500 5 4.500 11 V49 Q4.500 55.500 11 55.500 H49 Q55.500 55.500 55.500 49 V18" />
            <path d="M46.500 14 L26 34" strokeWidth="6.500" />
            <path d="M28.500 36.500 L22 39.500 L24 31.500 Z" fill="#666" strokeWidth="1" />
            <path d="M50 11 L55 6" strokeWidth="6.500" />
          </svg>
          发帖
        </NavItem>
        <NavItem>
          <svg width="60" height="60" viewBox="0 0 60 60" fill="none" stroke="#666" strokeWidth="3">
            <rect x="6" y="7" width="22" height="22" rx="4" />
            <rect x="6" y="34" width="22" height="22" rx="4" />
            <rect x="32.500" y="34" width="22" height="22" rx="4" />
            <path d="M41.500 7.500 Q43.500 5.500 45.500 7.500 L54 16 Q56 18 54 20 L45.500 28.500 Q43.500 30.500 41.500 28.500 L33 20 Q31 18 33 16 Z" />
          </svg>
          <Dot />
          功能
        </NavItem>
        <NavItem>
          <svg width="60" height="60" viewBox="0 0 60 60" fill="none" stroke="#666" strokeWidth="3">
            <circle cx="30" cy="30" r="26.500" />
            {[18, 30, 42].map((x) => (
              <circle key={x} cx={x} cy="30" r="3" fill="#666" stroke="none" />
            ))}
          </svg>
          设自选
        </NavItem>
      </Bottom>
    </Page>
  );
}
